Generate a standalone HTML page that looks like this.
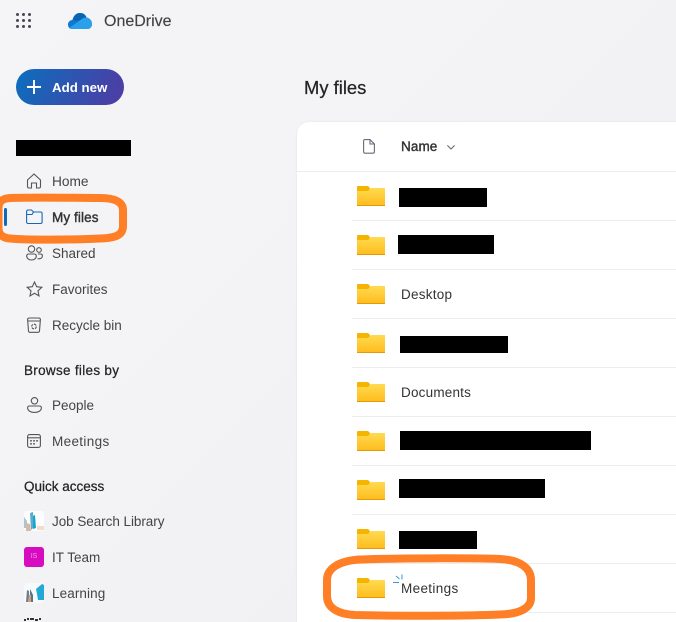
<!DOCTYPE html>
<html><head><meta charset="utf-8">
<style>
html,body{margin:0;padding:0;width:676px;height:622px;overflow:hidden}
#r{position:absolute;left:0;top:0;width:676px;height:622px;overflow:hidden;background:linear-gradient(135deg,#f5f5f7 0%,#f3f3f5 45%,#efeef2 100%);font-family:"Liberation Sans",sans-serif;color:#424242}
.t{position:absolute;white-space:nowrap;font-size:13.5px;line-height:18px}
.nav{left:52px;color:#444}
.h{left:24px;color:#242424;-webkit-text-stroke:.25px #242424}
.s{-webkit-text-stroke:.4px #333;color:#333}
.k{position:absolute;background:#000}
.card{position:absolute;left:297px;top:122px;width:400px;height:520px;background:#fff;border-radius:12px;box-shadow:0 0 2px rgba(0,0,0,.08)}
.d{position:absolute;left:352px;width:324px;height:1px;background:#ededed}
svg{position:absolute;overflow:visible}
.i{fill:none;stroke:#555;stroke-width:1.1}
.f{position:absolute;left:357px;width:28px;height:20px}
.f:before{content:"";position:absolute;left:0;top:0;width:13px;height:6px;background:#f5b400;border-radius:1px 3px 0 0}
.f:after{content:"";position:absolute;left:0;top:2px;width:28px;height:17px;border-bottom:1px solid #e4990a;background:linear-gradient(#ffdb52,#ffbd1e);clip-path:polygon(0 3px,11px 3px,14px 0,100% 0,100% 100%,0 100%)}
</style></head><body><div id="r">

<svg style="left:0;top:0" width="40" height="40"><g fill="#474750"><circle cx="17.5" cy="14.500" r="1.500"/><circle cx="23.500" cy="14.500" r="1.500"/><circle cx="29.500" cy="14.500" r="1.500"/><circle cx="17.500" cy="20.500" r="1.500"/><circle cx="23.500" cy="20.500" r="1.500"/><circle cx="29.500" cy="20.500" r="1.500"/><circle cx="17.500" cy="26.500" r="1.500"/><circle cx="23.500" cy="26.500" r="1.500"/><circle cx="29.500" cy="26.500" r="1.500"/></g></svg>

<svg style="left:68px;top:13px" width="24" height="16" viewBox="0 0 24 16">
<path d="M4 16C1.500 16 0 14 0 11.500 0 9 2 7 4.500 7 5.500 3 8 0 12 0c3 0 5.500 1.500 6.500 4.500C21.500 5 24 7.500 24 11c0 3-2 5-4.500 5z" fill="#0f78d4"/>
<path d="M4.500 7C5.500 3 8 0 12 0c3 0 5.500 1.500 6.500 4.500-2 0-3.500.5-4.500 1.500L9.500 8z" fill="#0a64b4"/>
<path d="M1.200 15C3 16 4 16 4 16h15.500c2.500 0 4.500-2 4.500-5 0-3.500-2.500-6-5.500-6.500-2 0-3.500.5-4.500 1.500z" fill="#2aa0ea"/>
</svg>
<div class="t" style="left:104px;top:13px;font-size:16px;color:#424242;-webkit-text-stroke:.15px #424242">OneDrive</div>

<div style="position:absolute;left:16px;top:69px;width:108px;height:36px;border-radius:18px;background:linear-gradient(115deg,#0f6cbd 5%,#4a3fa5 90%)"></div>
<svg style="left:27px;top:80px" width="14" height="14"><path d="M7 0v14M0 7h14" stroke="#fff" stroke-width="1.900"/></svg>
<div class="t" style="left:52px;top:79px;color:#fff;font-weight:bold;font-size:13.300px">Add new</div>

<div class="k" style="left:16px;top:140px;width:115px;height:16px"></div>

<svg class="i" style="left:26px;top:173px" width="16" height="16" viewBox="0 0 16 16"><path d="M1.500 7 8 1l6.500 6v6.500c0 .8-.6 1.500-1.400 1.500H10.500v-5h-5v5H2.900c-.8 0-1.400-.7-1.400-1.500z"/></svg>
<div class="t nav" style="top:173px;font-size:13.700px">Home</div>

<div style="position:absolute;left:4px;top:208px;width:3px;height:18px;background:#0f6cbd;border-radius:2px"></div>
<svg style="left:26px;top:209px" width="17" height="16" viewBox="0 0 17 16" fill="none" stroke="#1668b5" stroke-width="1.100"><path d="M.6 13V2.500C.6 1.600 1.300 1 2 1h3.500L7.500 3H14.500c.9 0 1.600.7 1.600 1.600V13c0 .9-.7 1.500-1.600 1.500H2.100C1.300 14.500.6 13.900.6 13zM.6 5.500H6L7.500 3"/></svg>
<div class="t s" style="left:52px;top:209px;letter-spacing:.1px">My files</div>

<svg class="i" style="left:26px;top:245px" width="17" height="16" viewBox="0 0 17 16"><circle cx="5.500" cy="4" r="3.200"/><circle cx="13" cy="5" r="2.300"/><path d="M.7 11c0-1.300.8-2 2-2h5.600c1.200 0 2 .7 2 2 0 2.500-2.200 4-4.800 4S.7 13.500.7 11zM12 9h2.500c1.100 0 1.900.7 1.900 1.800 0 2-1.600 3-3.400 3-.6 0-1 0-1.500-.2"/></svg>
<div class="t nav" style="top:245px">Shared</div>

<svg class="i" style="left:26px;top:281px" width="17" height="16" viewBox="0 0 17 16"><path d="M8.500 1l2.200 4.700 5.100.6-3.800 3.500 1 5.100-4.500-2.600-4.500 2.600 1-5.100L1.200 6.300l5.100-.6z"/></svg>
<div class="t nav" style="top:281px">Favorites</div>

<svg class="i" style="left:27px;top:317px" width="14" height="16" viewBox="0 0 14 16"><path d="M.6 2.500C.6 1.500 1.500 1 2.500 1h9c1 0 1.900.5 1.900 1.500L12.500 14c0 .6-.6 1.300-1.400 1.300H2.900c-.8 0-1.400-.7-1.400-1.300zM.8 4h12.400"/><circle cx="7" cy="9.500" r="2.300" stroke-dasharray="2.500 1"/></svg>
<div class="t nav" style="top:317px">Recycle bin</div>

<div class="t h" style="top:362px;letter-spacing:.3px">Browse files by</div>

<svg class="i" style="left:27px;top:397px" width="15" height="16" viewBox="0 0 15 16"><circle cx="7.500" cy="3.800" r="3.200"/><path d="M.6 10.800C.6 9.700 1.400 9 2.500 9h10c1.100 0 1.900.7 1.900 1.800 0 3-3.200 4.600-6.900 4.600S.6 13.800.6 10.800z"/></svg>
<div class="t nav" style="top:397px">People</div>

<svg class="i" style="left:27px;top:434px" width="14" height="14" viewBox="0 0 14 14"><rect x=".6" y=".6" width="12.800" height="12.800" rx="2"/><path d="M.6 3.800h12.800"/><g fill="#555" stroke="none"><rect x="3.200" y="6" width="1.600" height="1.600"/><rect x="6.200" y="6" width="1.600" height="1.600"/><rect x="9.200" y="6" width="1.600" height="1.600"/><rect x="3.200" y="9" width="1.600" height="1.600"/><rect x="6.200" y="9" width="1.600" height="1.600"/></g></svg>
<div class="t nav" style="top:433px;letter-spacing:.35px">Meetings</div>

<div class="t h" style="top:478px">Quick access</div>

<svg style="left:24px;top:511px" width="20" height="20" viewBox="0 0 20 20"><rect width="20" height="20" rx="3" fill="#fdfdfd"/><path d="M0 6l3 4v7H0z" fill="#a9c6cf"/><path d="M6 2l3-1 1 15-3 3z" fill="#5aaecb"/><path d="M9 5l2-1 1 13-3 1z" fill="#1aa5cc"/><path d="M2 12l4 1 1 7H2z" fill="#d9b9a5"/><path d="M13 15h7v4h-7z" fill="#f4dcca"/></svg>
<div class="t nav" style="top:513px;letter-spacing:-.05px">Job Search Library</div>

<div style="position:absolute;left:24px;top:547px;width:20px;height:20px;background:#d70cc0;border-radius:3px;color:#f098e0;font-size:7px;line-height:20px;text-align:center">IS</div>
<div class="t nav" style="top:549px">IT Team</div>

<svg style="left:24px;top:583px" width="20" height="20" viewBox="0 0 20 20"><rect width="20" height="20" rx="3" fill="#f6fafb"/><path d="M12 6l6-5 2 1v15h-6l-1-6z" fill="#22a9d6"/><path d="M3 7l2 1v11H2z" fill="#6c7f8c"/><path d="M6 6l3 6v7H6z" fill="#51738c"/><path d="M5 12l2 0 0 7H4z" fill="#d99e7c"/></svg>
<div class="t nav" style="top:585px;letter-spacing:.1px">Learning</div>

<svg style="left:24px;top:619px" width="20" height="3"><path d="M0 1h2M3 0h2M6 0h4M11 1h3M15 0h2" stroke="#333" stroke-width="2"/></svg>

<div class="t" style="left:304px;top:77px;font-size:18.400px;line-height:22px;color:#242424;-webkit-text-stroke:.25px #242424">My files</div>

<div class="card"></div>
<div style="position:absolute;left:297px;top:171px;width:379px;height:1px;background:#ececec"></div>

<svg class="i" style="left:363px;top:139px;stroke:#6a6a78" width="12" height="15" viewBox="0 0 12 15"><path d="M.6 1.800C.6 1 1.200.6 1.800.6H7l4.400 4.400v7.800c0 .8-.6 1.400-1.400 1.400H1.800c-.6 0-1.200-.6-1.200-1.400zM7 .6V5h4.400"/></svg>
<div class="t s" style="left:401px;top:138px;letter-spacing:.1px">Name</div>
<svg style="left:447px;top:145px" width="8" height="5"><path d="M.4.400 4 4 7.600.400" fill="none" stroke="#666" stroke-width="1"/></svg>

<div class="d" style="top:220px"></div>
<div class="d" style="top:269px"></div>
<div class="d" style="top:318px"></div>
<div class="d" style="top:367px"></div>
<div class="d" style="top:416px"></div>
<div class="d" style="top:465px"></div>
<div class="d" style="top:514px"></div>
<div class="d" style="top:563px"></div>
<div class="d" style="top:612px"></div>

<div class="f" style="top:186px"></div>
<div class="f" style="top:235px"></div>
<div class="f" style="top:284px"></div>
<div class="f" style="top:333px"></div>
<div class="f" style="top:382px"></div>
<div class="f" style="top:431px"></div>
<div class="f" style="top:480px"></div>
<div class="f" style="top:529px"></div>
<div class="f" style="top:578px"></div>

<div class="k" style="left:399px;top:188px;width:88px;height:19px"></div>
<div class="k" style="left:398px;top:235px;width:96px;height:19px"></div>
<div class="t" style="left:401px;top:286px;color:#333;letter-spacing:.25px">Desktop</div>
<div class="k" style="left:400px;top:336px;width:108px;height:17px"></div>
<div class="t" style="left:401px;top:384px;color:#333;letter-spacing:.2px">Documents</div>
<div class="k" style="left:400px;top:431px;width:191px;height:19px"></div>
<div class="k" style="left:399px;top:479px;width:146px;height:19px"></div>
<div class="k" style="left:399px;top:531px;width:78px;height:18px"></div>
<div class="t" style="left:401px;top:580px;color:#333;letter-spacing:.35px">Meetings</div>

<svg style="left:392px;top:573px" width="12" height="11"><path d="M1 9.500h6M4 3l3.500 3M10 1.500v5" stroke="#3a96dd" stroke-width="1" fill="none"/></svg>

<svg style="left:0;top:0" width="676" height="622" fill="none" stroke="#ff7f27" stroke-width="8">
<path d="M10 198C40 197 75 198 100 198C115 198 123 202 123 210V226C123 235 116 238 100 238.500C70 240 25 240 10 238.500C2 238-1.500 234-1.500 228V208C-1.500 202 2 198.500 10 198Z"/>
<path d="M360 559.500C400 558 470 558 500 559C520 560 531 568 531 580V598C531 608 520 614 500 614.500C470 616 390 616 355 615C338 614 327 608 327 596V580C327 568 340 560.500 360 559.500Z"/>
</svg>
</div></body></html>
